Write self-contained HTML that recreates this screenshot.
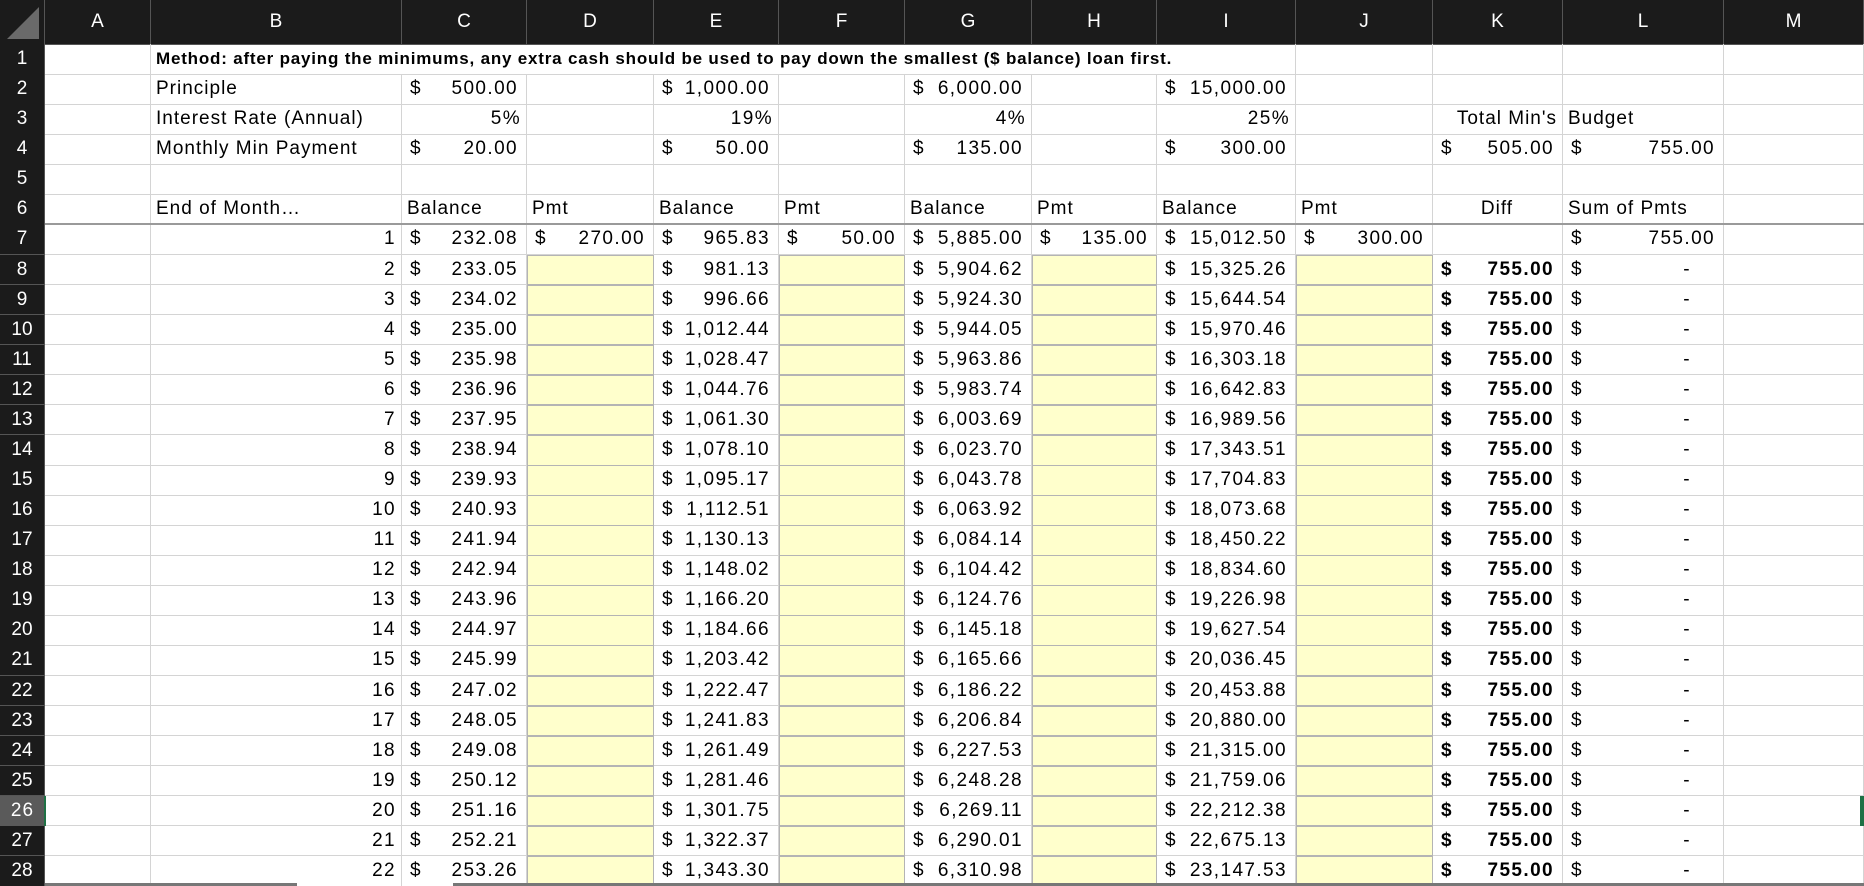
<!DOCTYPE html>
<html><head><meta charset="utf-8">
<style>
html,body{margin:0;padding:0;background:#fff;width:1864px;height:886px;overflow:hidden}
body{position:relative;font-family:"Liberation Sans",Arial,sans-serif;font-size:19px;color:#000;letter-spacing:1px}
.c{position:absolute;box-sizing:border-box;border-right:1px solid #d4d4d4;border-bottom:1px solid #d4d4d4;white-space:nowrap;overflow:visible;padding:0 5px}
.h{background:#1b1b1b;color:#fff;text-align:center;border-right:1px solid #555;border-bottom:1px solid #555;font-size:19px;letter-spacing:0}
.y{background:#ffffcc;border:1px solid #b4b4b4}
.a{display:flex;justify-content:space-between;padding:0 8px 0 8px;letter-spacing:1.4px}
.r{text-align:right}
.n{letter-spacing:1.4px}
.b{font-weight:bold}
.t{font-weight:bold;font-size:17px;letter-spacing:.8px}
</style></head><body>
<div id="g"></div>
<script>
var X=[0,45,151,402,527,654,779,905,1032,1157,1296,1433,1563,1724,1864];
var HH=44,RH=30.07;
var out=[];
function cell(ci,ri,cls,html,span){
  var x=X[ci],w=X[ci+(span||1)]-x;
  var y=ri==0?0:HH+(ri-1)*RH,h=ri==0?HH:RH;
  out.push('<div class="c '+cls+'" style="left:'+x+'px;top:'+y.toFixed(1)+'px;width:'+w+'px;height:'+(h+0.6).toFixed(1)+'px;line-height:'+(h-1).toFixed(0)+'px">'+html+'</div>');
}
function acc(v){return '<span>$</span><span>'+v+'</span>';}
var cols=' ABCDEFGHIJKLM';
cell(0,0,'h','<svg width="40" height="40" style="position:absolute;left:3px;top:3px"><polygon points="36,4 36,36 4,36" fill="#6a6a6a"/></svg>');
for(var i=1;i<=13;i++)cell(i,0,'h',cols[i]);
var C=["232.08","233.05","234.02","235.00","235.98","236.96","237.95","238.94","239.93","240.93","241.94","242.94","243.96","244.97","245.99","247.02","248.05","249.08","250.12","251.16","252.21","253.26"];
var E=["965.83","981.13","996.66","1,012.44","1,028.47","1,044.76","1,061.30","1,078.10","1,095.17","1,112.51","1,130.13","1,148.02","1,166.20","1,184.66","1,203.42","1,222.47","1,241.83","1,261.49","1,281.46","1,301.75","1,322.37","1,343.30"];
var G=["5,885.00","5,904.62","5,924.30","5,944.05","5,963.86","5,983.74","6,003.69","6,023.70","6,043.78","6,063.92","6,084.14","6,104.42","6,124.76","6,145.18","6,165.66","6,186.22","6,206.84","6,227.53","6,248.28","6,269.11","6,290.01","6,310.98"];
var I=["15,012.50","15,325.26","15,644.54","15,970.46","16,303.18","16,642.83","16,989.56","17,343.51","17,704.83","18,073.68","18,450.22","18,834.60","19,226.98","19,627.54","20,036.45","20,453.88","20,880.00","21,315.00","21,759.06","22,212.38","22,675.13","23,147.53"];
for(var r=1;r<=28;r++){
  cell(0,r,'h',''+r);
  if(r==1){cell(1,1,'','');cell(2,1,'t','Method: after paying the minimums, any extra cash should be used to pay down the smallest ($ balance) loan first.',8);
    for(var c=10;c<=13;c++)cell(c,1,'','');continue;}
  for(var c=1;c<=13;c++){
    var cls='',t='';
    if(r==2){if(c==2)t='Principle';if(c==3){cls='a';t=acc('500.00');}if(c==5){cls='a';t=acc('1,000.00');}if(c==7){cls='a';t=acc('6,000.00');}if(c==9){cls='a';t=acc('15,000.00');}}
    if(r==3){if(c==2)t='Interest Rate (Annual)';if(c==3){cls='r n';t='5%';}if(c==5){cls='r n';t='19%';}if(c==7){cls='r n';t='4%';}if(c==9){cls='r n';t='25%';}if(c==11){cls='r';t="Total Min's";}if(c==12)t='Budget';}
    if(r==4){if(c==2)t='Monthly Min Payment';if(c==3){cls='a';t=acc('20.00');}if(c==5){cls='a';t=acc('50.00');}if(c==7){cls='a';t=acc('135.00');}if(c==9){cls='a';t=acc('300.00');}if(c==11){cls='a';t=acc('505.00');}if(c==12){cls='a';t=acc('755.00');}}
    if(r==6){if(c==2)t='End of Month…';if(c==3||c==5||c==7||c==9)t='Balance';if(c==4||c==6||c==8||c==10)t='Pmt';if(c==11){cls='r';t='Diff&nbsp;&nbsp;&nbsp;&nbsp;&nbsp;&nbsp;&nbsp;';}if(c==12)t='Sum of Pmts';}
    if(r>=7){var k=r-7;
      if(c==2){cls='r n';t=''+(k+1);}
      if(c==3){cls='a';t=acc(C[k]);}
      if(c==5){cls='a';t=acc(E[k]);}
      if(c==7){cls='a';t=acc(G[k]);}
      if(c==9){cls='a';t=acc(I[k]);}
      if(c==4||c==6||c==8||c==10){
        if(r==7){cls='a';t=acc({4:'270.00',6:'50.00',8:'135.00',10:'300.00'}[c]);}
        else cls='y';
      }
      if(c==11&&r>7){cls='a b';t=acc('755.00');}
      if(c==12){cls='a';t=r==7?acc('755.00'):'<span>$</span><span style="padding-right:24px">-</span>';}
    }
    cell(c,r,cls,t);
  }
}
var y6=HH+6*RH-1;
out.push('<div style="position:absolute;left:45px;top:'+y6.toFixed(1)+'px;width:1819px;height:2px;background:#9a9a9a"></div>');
var y26=HH+25*RH;
out.push('<div style="position:absolute;left:0;top:'+y26.toFixed(1)+'px;width:45px;height:'+RH+'px;background:#5a5a5a;color:#fff;text-align:center;line-height:29px;font-size:19px">26</div>');
out.push('<div style="position:absolute;left:44px;top:'+y26.toFixed(1)+'px;width:2px;height:'+RH+'px;background:#1e7145"></div>');
out.push('<div style="position:absolute;left:1860px;top:'+y26.toFixed(1)+'px;width:4px;height:'+RH+'px;background:#1e7145"></div>');
out.push('<div style="position:absolute;left:45px;top:883px;width:252px;height:3px;background:#777"></div>');
out.push('<div style="position:absolute;left:453px;top:883px;width:1411px;height:3px;background:#777"></div>');
document.getElementById('g').innerHTML=out.join('');
</script>
</body></html>
